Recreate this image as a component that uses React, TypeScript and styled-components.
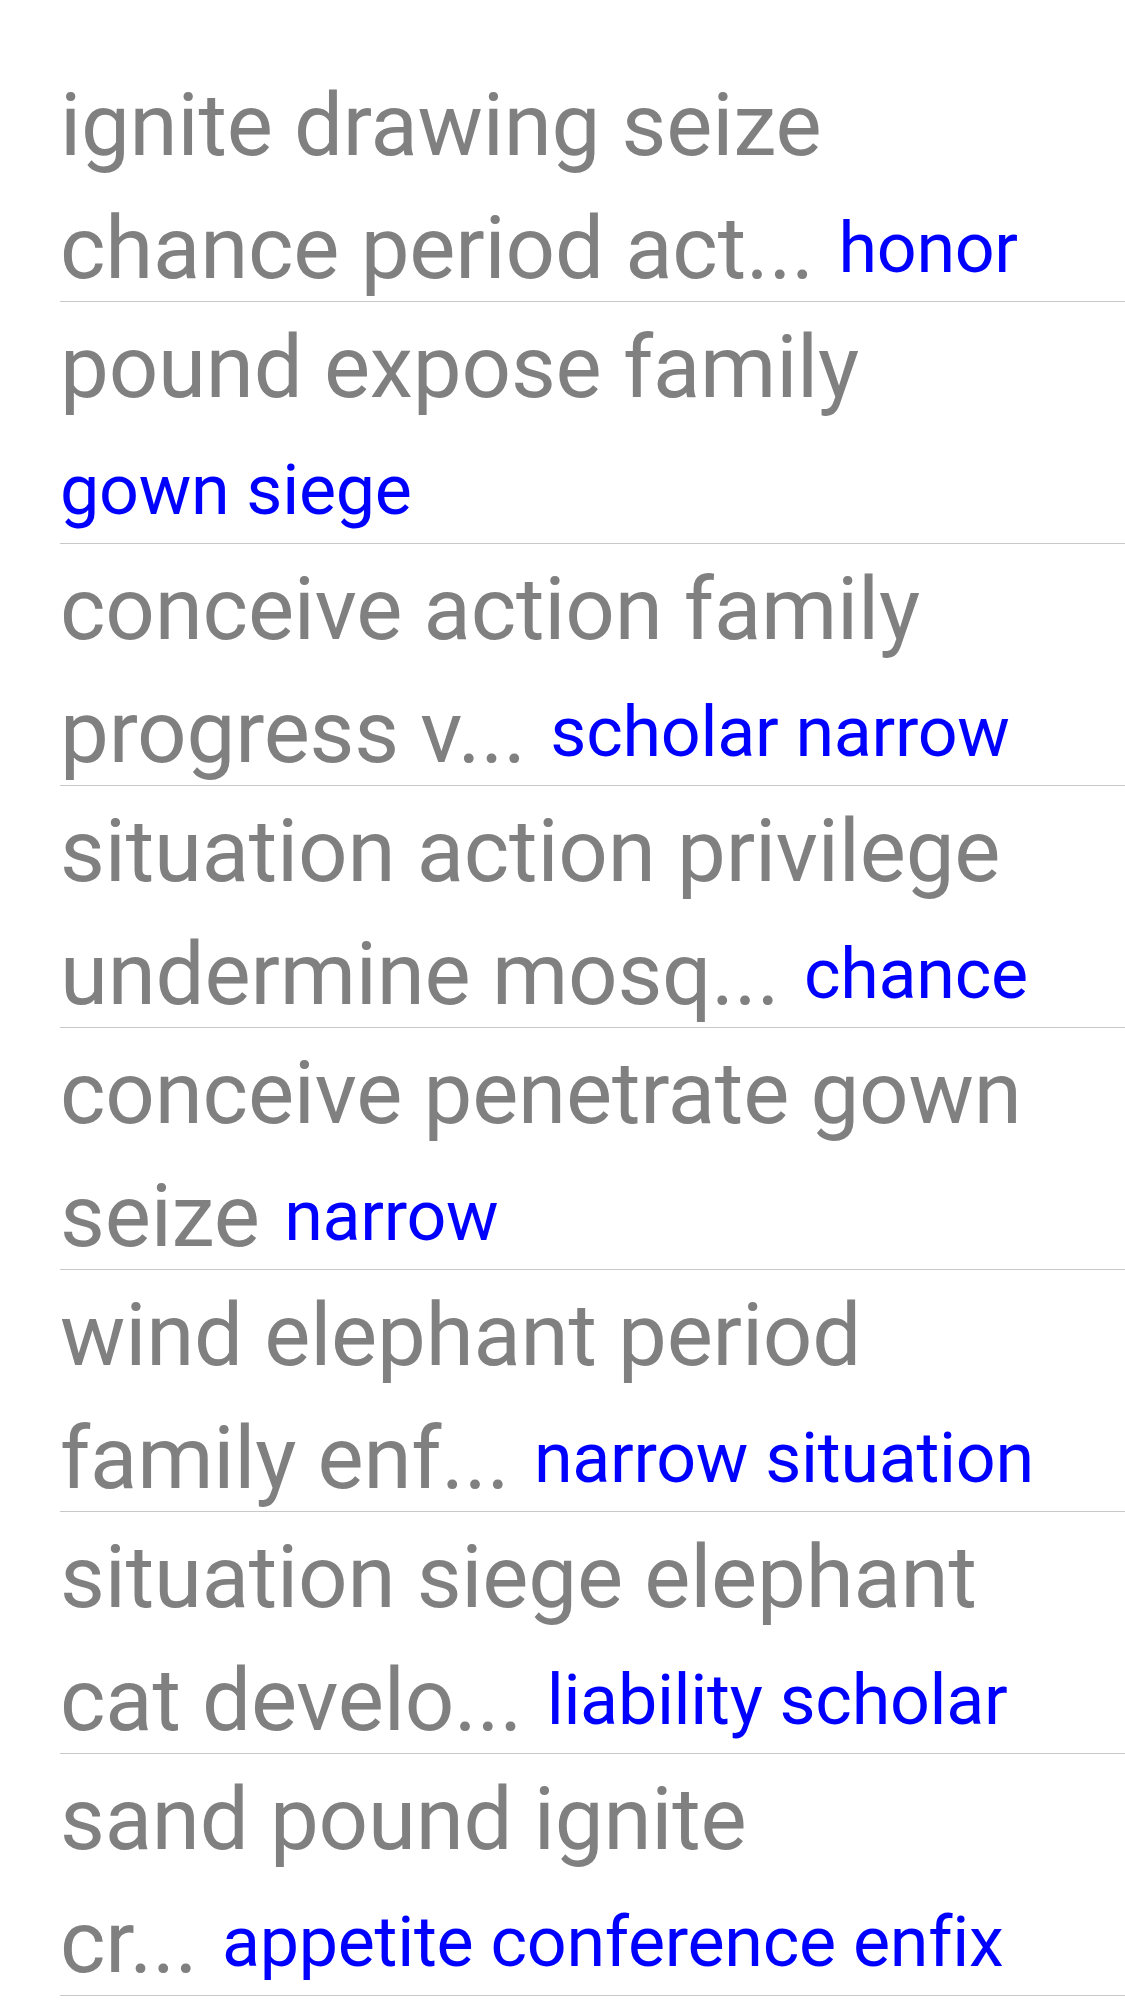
import React from "react";
import styled, { createGlobalStyle } from "styled-components";

const Global = createGlobalStyle`
  html, body {
    margin: 0;
    padding: 0;
    background: #ffffff;
  }
  body {
    font-family: Roboto, "Noto Sans", sans-serif;
  }
`;

const List = styled.div`
  display: flex;
  flex-direction: column;
  padding-top: 60px;
  padding-left: 60px;
`;

const Row = styled.div`
  box-sizing: border-box;
  height: 242px;
  padding-top: 4px;
  border-bottom: 1px solid #c8c8c8;
`;

const Text = styled.p`
  margin: 0;
  white-space: nowrap;
  font-family: Roboto, "Noto Sans", sans-serif;
  font-size: 87px;
  line-height: 123px;
`;

const Title = styled.span`
  color: #808080;
  font-size: 87px;
  letter-spacing: -0.2px;
`;

const Tag = styled.span<{ $lead?: boolean }>`
  color: #0000ff;
  font-size: 70px;
  letter-spacing: -0.3px;
  vertical-align: 6px;
  margin-left: ${(p) => (p.$lead ? "0" : "3px")};
`;

type Item = { l1: string; l2?: string; tag: string };

const items: Item[] = [
  { l1: "ignite drawing seize", l2: "chance period act...", tag: "honor" },
  { l1: "pound expose family", tag: "gown siege" },
  { l1: "conceive action family", l2: "progress v...", tag: "scholar narrow" },
  { l1: "situation action privilege", l2: "undermine mosq...", tag: "chance" },
  { l1: "conceive penetrate gown", l2: "seize", tag: "narrow" },
  { l1: "wind elephant period", l2: "family enf...", tag: "narrow situation" },
  { l1: "situation siege elephant", l2: "cat develo...", tag: "liability scholar" },
  { l1: "sand pound ignite", l2: "cr...", tag: "appetite conference enfix" },
];

export default function App() {
  return (
    <>
      <Global />
      <List>
        {items.map((it, i) => (
          <Row key={i}>
            <Text>
              <Title>{it.l1}</Title>
              <br />
              {it.l2 ? (
                <>
                  <Title>{it.l2} </Title>
                  <Tag>{it.tag}</Tag>
                </>
              ) : (
                <Tag $lead>{it.tag}</Tag>
              )}
            </Text>
          </Row>
        ))}
      </List>
    </>
  );
}
